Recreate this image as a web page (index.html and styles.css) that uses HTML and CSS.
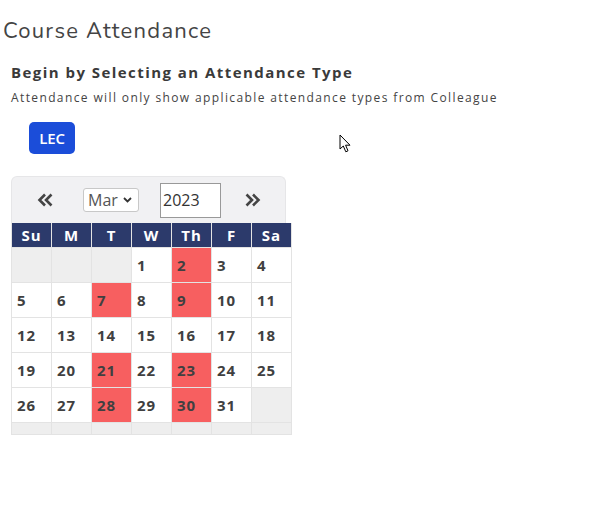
FILE: index.html
```html
<!DOCTYPE html>
<html>
<head>
<meta charset="utf-8">
<link rel="stylesheet" href="styles.css">
</head>
<body>
<div class="page">
  <h1 class="title">Course Attendance</h1>
  <div class="content">
    <h2 class="heading">Begin by Selecting an Attendance Type</h2>
    <p class="note">Attendance will only show applicable attendance types from Colleague</p>
    <div class="types">
      <button class="type-btn">LEC</button>
    </div>
    <div class="calendar">
      <div class="nav">
        <span class="arrow">
          <svg width="17" height="14" viewBox="0 0 17 14"><path d="M8 1.5 L2.5 7 L8 12.5 M14.5 1.5 L9 7 L14.5 12.5" fill="none" stroke="#444" stroke-width="2.6" stroke-linejoin="miter"/></svg>
        </span>
        <span class="select-wrap">
          <select class="month"><option>Mar</option></select>
          <svg class="caret" width="9" height="6" viewBox="0 0 9 6"><path d="M1 1 L4.5 4.5 L8 1" fill="none" stroke="#333" stroke-width="1.8"/></svg>
        </span>
        <input class="year" type="text" value="2023">
        <span class="arrow">
          <svg width="17" height="14" viewBox="0 0 17 14"><path d="M2.5 1.5 L8 7 L2.5 12.5 M9 1.5 L14.5 7 L9 12.5" fill="none" stroke="#444" stroke-width="2.6" stroke-linejoin="miter"/></svg>
        </span>
      </div>
      <div class="grid">
        <div class="hd">Su</div><div class="hd">M</div><div class="hd">T</div><div class="hd">W</div><div class="hd">Th</div><div class="hd">F</div><div class="hd">Sa</div>
        <div class="d empty"></div><div class="d empty"></div><div class="d empty"></div><div class="d">1</div><div class="d mark">2</div><div class="d">3</div><div class="d">4</div>
        <div class="d">5</div><div class="d">6</div><div class="d mark">7</div><div class="d">8</div><div class="d mark">9</div><div class="d">10</div><div class="d">11</div>
        <div class="d">12</div><div class="d">13</div><div class="d">14</div><div class="d">15</div><div class="d">16</div><div class="d">17</div><div class="d">18</div>
        <div class="d">19</div><div class="d">20</div><div class="d mark">21</div><div class="d">22</div><div class="d mark">23</div><div class="d">24</div><div class="d">25</div>
        <div class="d">26</div><div class="d">27</div><div class="d mark">28</div><div class="d">29</div><div class="d mark">30</div><div class="d">31</div><div class="d empty"></div>
        <div class="e"></div><div class="e"></div><div class="e"></div><div class="e"></div><div class="e"></div><div class="e"></div><div class="e"></div>
      </div>
    </div>
  </div>
  <svg class="cursor" width="14" height="20" viewBox="0 0 14 20"><path d="M1 1 L1 15 L4.3 12 L6.8 17.8 L9 16.8 L6.6 11.2 L11 11.2 Z" fill="#fff" stroke="#000" stroke-width="1" stroke-linejoin="miter"/></svg>
</div>
</body>
</html>
```
FILE: styles.css
```css
html, body {
  margin: 0;
  padding: 0;
  background: #fff;
}
.page {
  position: relative;
  width: 595px;
  height: 529px;
  font-family: "Open Sans", "Liberation Sans", sans-serif;
  color: #444;
}
.title {
  margin: 0;
  padding: 17px 0 0 3px;
  font-family: "Nunito", "Lato", "Open Sans", sans-serif;
  font-weight: 400;
  font-size: 22px;
  line-height: 28px;
  letter-spacing: 1.25px;
  color: #444;
}
.content {
  padding-left: 11px;
}
.heading {
  margin: 17px 0 0;
  font-size: 15px;
  line-height: 20px;
  font-weight: 700;
  letter-spacing: 1.45px;
  color: #3a3a3a;
}
.note {
  margin: 8px 0 0;
  font-size: 12px;
  line-height: 16px;
  letter-spacing: 1.38px;
  color: #444;
}
.types {
  padding: 16px 0 0 18px;
}
.type-btn {
  display: block;
  width: 46px;
  height: 32px;
  border: none;
  border-radius: 5px;
  background: #1b4dd9;
  color: #fff;
  font-family: "Open Sans", sans-serif;
  font-size: 15px;
  font-weight: 600;
  letter-spacing: -0.2px;
  padding: 0;
}
.calendar {
  margin-top: 22px;
}
.nav {
  width: 273px;
  height: 46px;
  background: #f1f1f3;
  border: 1px solid #e6e6e8;
  border-bottom: none;
  border-radius: 6px 6px 0 0;
  display: flex;
  align-items: center;
  box-sizing: content-box;
}
.arrow {
  display: flex;
  align-items: center;
  width: 17px;
  height: 14px;
}
.nav .arrow:first-child {
  margin-left: 25px;
}
.select-wrap {
  position: relative;
  margin-left: 29px;
  display: block;
  height: 24px;
}
.month {
  appearance: none;
  -webkit-appearance: none;
  width: 56px;
  height: 24px;
  border: 1px solid #c8c8c8;
  border-radius: 3px;
  background: #fff;
  font-family: "Open Sans", sans-serif;
  font-size: 16px;
  color: #555;
  padding: 0 0 0 4px;
  margin: 0;
}
.caret {
  position: absolute;
  right: 7px;
  top: 9px;
}
.year {
  margin-left: 21px;
  width: 61px;
  height: 35px;
  box-sizing: border-box;
  border: 1px solid #999;
  border-radius: 0;
  padding: 0 0 0 2px;
  font-family: "Open Sans", sans-serif;
  font-size: 16px;
  color: #333;
  background: #fff;
}
.nav .arrow:last-child {
  margin-left: 23px;
}
.grid {
  display: grid;
  grid-template-columns: repeat(7, 39px);
  grid-template-rows: 24px repeat(5, 34px) 11px;
  gap: 1px;
  padding: 0 1px 1px;
  background: #e3e3e3;
  width: max-content;
}
.hd {
  background: #2c3a6b;
  color: #fff;
  font-weight: 700;
  font-size: 15px;
  letter-spacing: 1px;
  display: flex;
  align-items: center;
  justify-content: center;
}
.d {
  background: #fff;
  font-weight: 700;
  font-size: 15px;
  letter-spacing: 1px;
  color: #404040;
  display: flex;
  align-items: center;
  padding-left: 5px;
}
.d.empty, .e {
  background: #eeeeee;
}
.d.mark {
  background: #f75f60;
}
.cursor {
  position: absolute;
  left: 339px;
  top: 134px;
}
```
